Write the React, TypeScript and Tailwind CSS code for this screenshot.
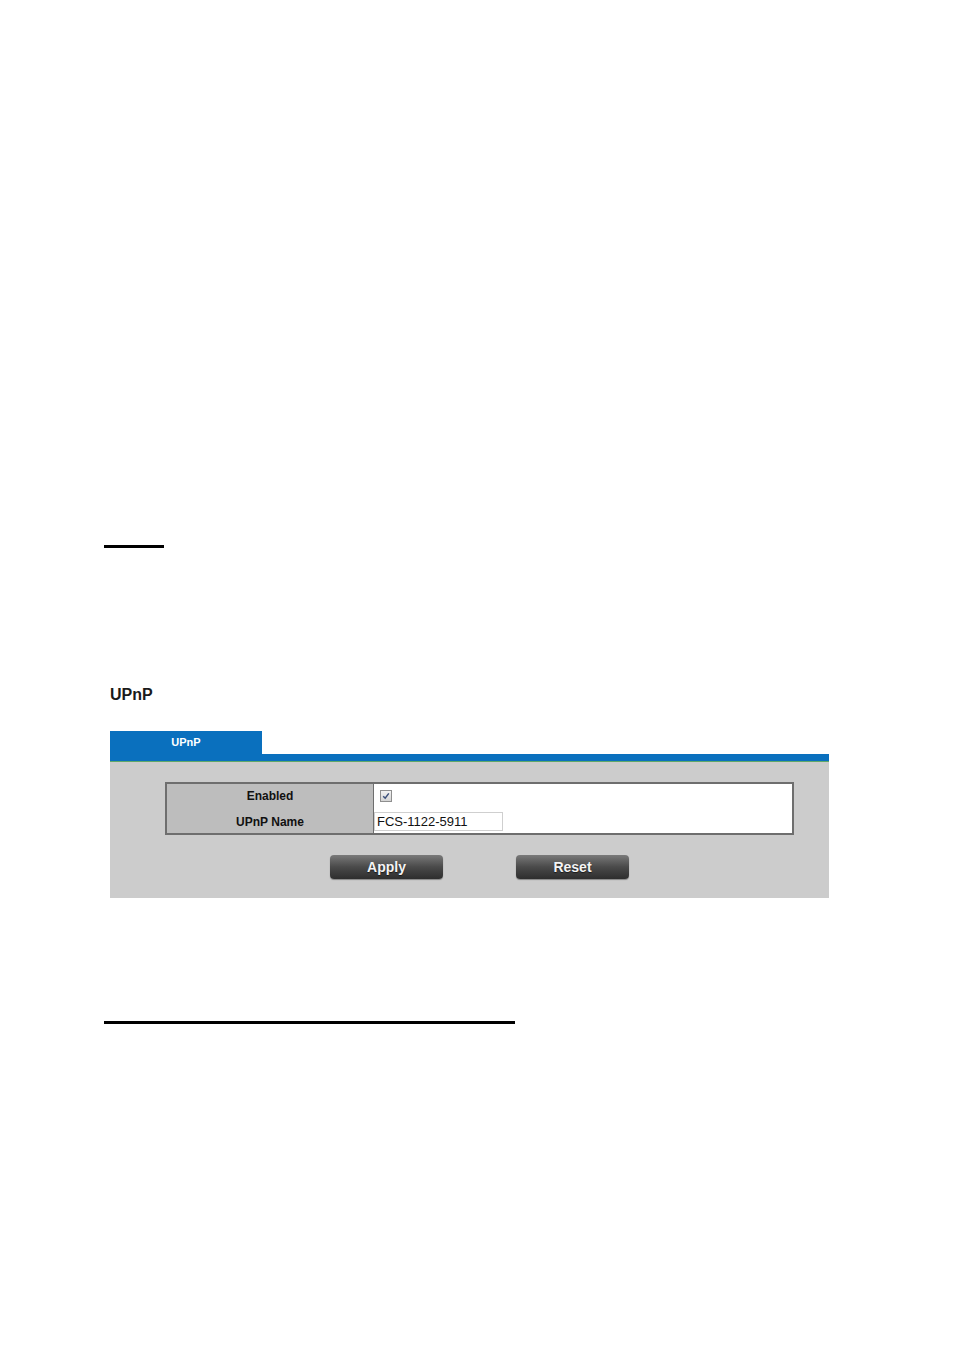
import React from "react";

const font = { fontFamily: '"Liberation Sans", Arial, sans-serif' };

function Checkbox() {
    return (
        <span className="inline-flex h-[12px] w-[12px] items-center justify-center border border-[#8e8e8e] bg-gradient-to-b from-[#f2f2f2] to-[#d4d4d4]">
            <svg width="8" height="8" viewBox="0 0 8 8">
                <path d="M1.2 4.2 L3.2 6.2 L6.8 1.4" fill="none" stroke="#3b4f7a" strokeWidth="1.5" />
            </svg>
        </span>
    );
}

function Button({ label }: { label: string }) {
    return (
        <button className="h-[24px] w-[113px] rounded-[4px] bg-gradient-to-b from-[#7a7a7a] via-[#4a4a4a] to-[#2e2e2e] text-[14px] font-bold text-[#f4f4f4] shadow-[0_1px_1px_rgba(0,0,0,0.35)] [text-shadow:0_1px_1px_rgba(0,0,0,0.6)]">
            {label}
        </button>
    );
}

export default function App() {
    return (
        <div className="min-h-[1350px] bg-white pl-[104px] pt-[545px]" style={font}>
            <div className="h-[3px] w-[60px] bg-black" />

            <div className="ml-[6px] mt-[138px] w-[719px]">
                <h1 className="text-[16px] font-bold leading-[18px] text-[#1a1a1a]">UPnP</h1>

                <div className="mt-[27px] flex items-end">
                    <div className="flex h-[23px] w-[152px] items-center justify-center bg-[#0a70be] text-[11px] font-bold text-white">
                        UPnP
                    </div>
                </div>
                <div className="h-[8px] border-b border-[#5fa86a] bg-[#0a70be]" />

                <div className="bg-[#cccccc] px-[55px] pb-[19px] pt-[20px]">
                    <div className="flex w-[629px] border-2 border-[#6e6e6e] text-[12px]">
                        <div className="flex w-[207px] flex-col border-r border-[#6e6e6e] bg-[#bdbdbd] font-bold text-[#111]">
                            <div className="flex h-[23px] items-center justify-center">Enabled</div>
                            <div className="flex h-[26px] items-center justify-center pt-[3px]">UPnP Name</div>
                        </div>
                        <div className="flex flex-1 flex-col bg-white">
                            <div className="flex h-[23px] items-center pl-[6px]">
                                <Checkbox />
                            </div>
                            <div className="flex h-[26px] items-center pt-[3px]">
                                <div className="flex h-[19px] w-[129px] items-center border border-[#cfcfcf] pl-[2px] text-[13px] text-[#111]">
                                    FCS-1122-5911
                                </div>
                            </div>
                        </div>
                    </div>

                    <div className="mt-[20px] flex gap-[73px] pl-[165px]">
                        <Button label="Apply" />
                        <Button label="Reset" />
                    </div>
                </div>
            </div>

            <div className="mt-[123px] h-[3px] w-[411px] bg-black" />
        </div>
    );
}
